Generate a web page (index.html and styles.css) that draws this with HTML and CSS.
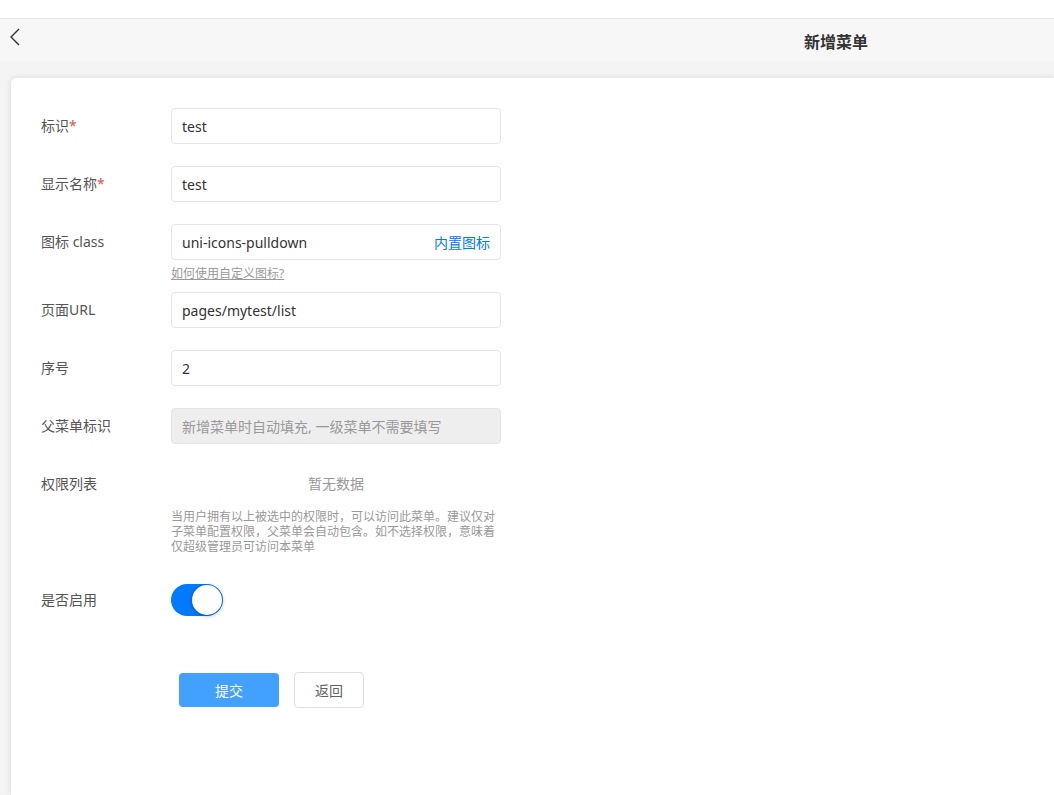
FILE: index.html
```html
<!DOCTYPE html>
<html lang="zh-CN">
<head>
  <meta charset="UTF-8">
  <meta name="viewport" content="width=device-width, initial-scale=1.0">
  <title>新增菜单</title>
  <link rel="stylesheet" href="styles.css">
</head>
<body>
  <div class="status-bar"></div>

  <header class="nav-bar">
    <button class="nav-back" aria-label="返回">
      <svg width="14" height="20" viewBox="0 0 14 20">
        <path d="M10 2 L2 10 L10 18" fill="none" stroke="#333" stroke-width="1.4"/>
      </svg>
    </button>
    <h1 class="nav-title">新增菜单</h1>
  </header>

  <main class="page">
    <form class="card">
      <div class="form-row">
        <label class="form-label">标识<span class="required">*</span></label>
        <div class="form-field">
          <div class="input">test</div>
        </div>
      </div>

      <div class="form-row">
        <label class="form-label">显示名称<span class="required">*</span></label>
        <div class="form-field">
          <div class="input">test</div>
        </div>
      </div>

      <div class="form-row form-row-hint">
        <label class="form-label">图标 class</label>
        <div class="form-field">
          <div class="input">
            <span>uni-icons-pulldown</span>
            <span class="input-action">内置图标</span>
          </div>
          <a class="field-link" href="#">如何使用自定义图标?</a>
        </div>
      </div>

      <div class="form-row">
        <label class="form-label">页面URL</label>
        <div class="form-field">
          <div class="input">pages/mytest/list</div>
        </div>
      </div>

      <div class="form-row">
        <label class="form-label">序号</label>
        <div class="form-field">
          <div class="input">2</div>
        </div>
      </div>

      <div class="form-row">
        <label class="form-label">父菜单标识</label>
        <div class="form-field">
          <div class="input input-disabled">新增菜单时自动填充, 一级菜单不需要填写</div>
        </div>
      </div>

      <div class="form-row form-row-help">
        <label class="form-label">权限列表</label>
        <div class="form-field">
          <div class="empty">暂无数据</div>
          <p class="help-text">当用户拥有以上被选中的权限时，可以访问此菜单。建议仅对子菜单配置权限，父菜单会自动包含。如不选择权限，意味着仅超级管理员可访问本菜单</p>
        </div>
      </div>

      <div class="form-row">
        <label class="form-label">是否启用</label>
        <div class="form-field">
          <span class="switch"><span class="switch-knob"></span></span>
        </div>
      </div>

      <div class="form-actions">
        <button type="button" class="btn btn-primary">提交</button>
        <button type="button" class="btn btn-default">返回</button>
      </div>
    </form>
  </main>
</body>
</html>
```

FILE: styles.css
```css
* {
  box-sizing: border-box;
  margin: 0;
  padding: 0;
}

body {
  font-family: "Noto Sans", "Noto Sans CJK SC", sans-serif;
  font-size: 14px;
  color: #333;
  background: #f4f4f4;
  height: 795px;
  overflow: hidden;
  display: flex;
  flex-direction: column;
}

.status-bar {
  height: 19px;
  background: #fff;
  border-bottom: 1px solid #e6e6e6;
}

.nav-bar {
  height: 43px;
  background: #f7f7f7;
  display: flex;
  align-items: center;
}

.nav-back {
  width: 28px;
  height: 28px;
  margin-left: 9px;
  margin-top: -7px;
  border: none;
  background: none;
  display: flex;
  align-items: center;
}

.nav-title {
  margin-left: 767px;
  font-size: 16px;
  font-weight: 600;
  color: #333;
}

.page {
  flex: 1;
  padding: 16px 0 0 11px;
  display: flex;
}

.card {
  flex: 1;
  background: #fff;
  border-radius: 5px 0 0 0;
  box-shadow: 0 0 6px rgba(0, 0, 0, 0.12);
  padding: 30px 0 0 30px;
}

.form-row {
  display: flex;
  align-items: flex-start;
  margin-bottom: 22px;
}

.form-row-hint {
  margin-bottom: 11px;
}

.form-row-help {
  margin-bottom: 28px;
}

.form-label {
  width: 130px;
  line-height: 36px;
  color: #555;
}

.required {
  color: #dd524d;
}

.form-field {
  width: 330px;
}

.input {
  height: 36px;
  border: 1px solid #e5e5e5;
  border-radius: 4px;
  padding: 0 10px;
  display: flex;
  align-items: center;
  justify-content: space-between;
  color: #333;
}

.input-action {
  color: #007aff;
}

.input-disabled {
  background: #eee;
  color: #999;
}

.field-link {
  display: block;
  width: max-content;
  margin-top: 7px;
  font-size: 12px;
  line-height: 14px;
  color: #999;
}

.empty {
  line-height: 36px;
  text-align: center;
  color: #999;
}

.help-text {
  margin-top: 7px;
  font-size: 12px;
  line-height: 15px;
  color: #999;
}

.switch {
  display: block;
  position: relative;
  width: 52px;
  height: 32px;
  margin-top: 2px;
  border-radius: 16px;
  background: #007aff;
}

.switch-knob {
  position: absolute;
  top: 1px;
  right: 1px;
  width: 30px;
  height: 30px;
  border-radius: 50%;
  background: #fff;
  box-shadow: 0 1px 4px rgba(0, 0, 0, 0.3);
}

.form-actions {
  display: flex;
  align-items: center;
  gap: 15px;
  padding-left: 138px;
  margin-top: 54px;
}

.btn {
  font-family: inherit;
  font-size: 14px;
  border-radius: 4px;
  cursor: pointer;
}

.btn-primary {
  width: 100px;
  height: 34px;
  border: none;
  background: #42a0ff;
  color: #fff;
}

.btn-default {
  width: 70px;
  height: 36px;
  border: 1px solid #dcdfe6;
  background: #fff;
  color: #606266;
}
```
